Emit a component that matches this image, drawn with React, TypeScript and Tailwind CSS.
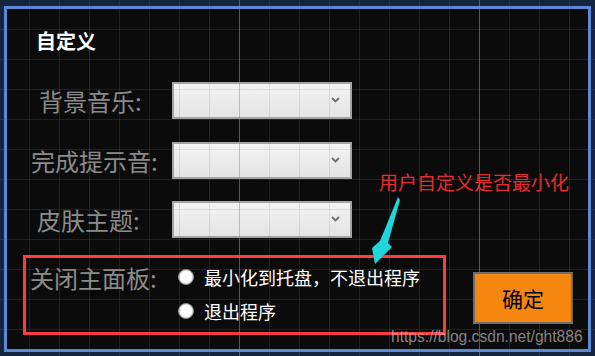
import React from "react";

const rows = [
  { label: "背景音乐:", pad: "pl-[32px]", gap: "mt-[31px]" },
  { label: "完成提示音:", pad: "pl-[24px]", gap: "mt-[23px]" },
  { label: "皮肤主题:", pad: "pl-[30px]", gap: "mt-[22px]" },
];

function Combo() {
  return (
    <div className="relative w-[180px] h-[37px] border-2 border-[#a4a4a4] bg-[linear-gradient(to_bottom,#f3f3f3,#e4e4e4)]">
      <svg className="absolute right-[10px] top-[13px]" width="9" height="6" viewBox="0 0 9 6">
        <polyline points="1,1 4.5,4.5 8,1" fill="none" stroke="#6f6f6f" strokeWidth="1.8" />
      </svg>
    </div>
  );
}

function Radio({ text }: { text: string }) {
  return (
    <div className="flex items-center h-[24px]">
      <span className="ml-[2px] w-[16px] h-[16px] rounded-full bg-white border border-[#8d8d8d] shadow-[inset_0_0_2px_rgba(0,0,0,0.35)]" />
      <span className="ml-[10px] text-[18px] leading-[18px] text-white">{text}</span>
    </div>
  );
}

export default function App() {
  return (
    <div className="relative w-[595px] h-[356px] overflow-hidden bg-[#142540] pl-[4px] pt-[6px] font-['Noto_Sans_CJK_SC','Noto_Sans',sans-serif]">
      {/* designer form */}
      <div className="w-[587px] h-[346px] border-[3px] border-[#5b89d6] bg-[#0c0b0c]">
        <div className="pl-[29px] pt-[22px] text-[20px] leading-[20px] font-bold text-white">自定义</div>

        {rows.map((r) => (
          <div key={r.label} className={`flex items-center ${r.gap}`}>
            <div className={`w-[165px] ${r.pad} text-[24px] leading-[24px] text-[#8b8b8b]`}>{r.label}</div>
            <Combo />
          </div>
        ))}

        <div className="flex items-start mt-[17px] ml-[16px]">
          <div className="flex w-[423px] h-[80px] border-[3px] border-[#ff3b3b]">
            <div className="w-[150px] pl-[4px] pt-[8px] text-[24px] leading-[24px] text-[#8b8b8b]">关闭主面板:</div>
            <div className="flex flex-col gap-[10px] pt-[7px]">
              <Radio text="最小化到托盘，不退出程序" />
              <Radio text="退出程序" />
            </div>
          </div>
          <button className="relative z-20 ml-[27px] mt-[17px] w-[100px] h-[52px] border-2 border-[#6e6e6e] bg-[#f5860f] text-[21px] leading-[21px] text-black">
            确定
          </button>
        </div>
      </div>

      {/* grid overlay */}
      <div className="pointer-events-none absolute inset-0 z-10 [background-image:linear-gradient(to_right,rgba(150,150,150,0.45)_1px,transparent_1px),linear-gradient(to_right,rgba(128,128,128,0.18)_1px,transparent_1px),linear-gradient(to_bottom,rgba(128,128,128,0.18)_1px,transparent_1px)] [background-size:240px_100%,30px_30px,30px_30px] [background-position:239px_0,29px_29px,29px_29px]" />

      {/* annotation */}
      <div className="absolute z-20 left-[379px] top-[172px] text-[19px] leading-[19px] text-[#e32d30]">用户自定义是否最小化</div>
      <svg className="absolute z-20 left-[368px] top-[194px]" width="34" height="72" viewBox="0 0 34 72">
        <polygon points="30,3 32,6 20,49 24,53 7,70 4,54 12,47" fill="#1fd6dc" />
      </svg>

      {/* watermark */}
      <div className="absolute z-20 left-[391px] top-[329px] font-['Liberation_Sans',sans-serif] text-[15.6px] leading-[15.6px] text-[rgba(215,215,215,0.6)]">
        https://blog.csdn.net/ght886
      </div>
    </div>
  );
}
